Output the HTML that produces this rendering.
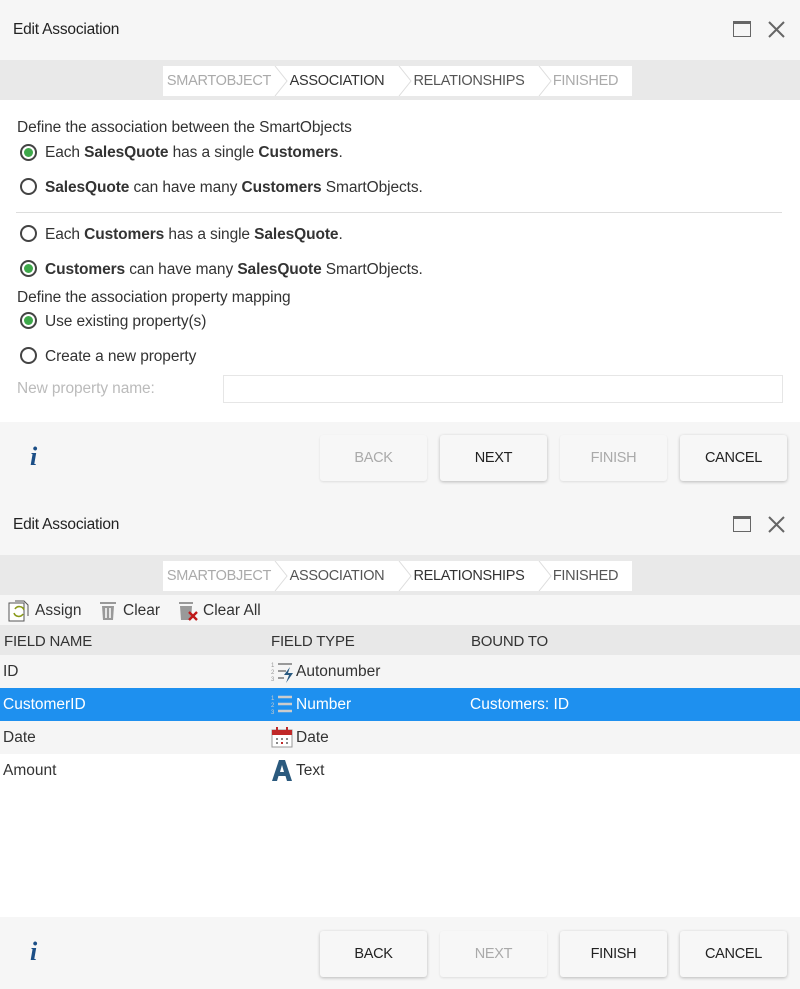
<!DOCTYPE html>
<html><head><style>
*{box-sizing:border-box;margin:0;padding:0}
body{width:800px;height:989px;overflow:hidden;font-family:"Liberation Sans",sans-serif;font-size:14px;color:#333;background:#fff;position:relative}
.abs{position:absolute}
.hdr{left:0;width:800px;height:61px;background:#f6f6f6}
.title{left:13px;font-size:15.5px;color:#222;letter-spacing:-.2px}
.wiz{left:0;width:800px;height:40px;background:#e9e9e9}
.steps{left:163px;width:469px;height:30px;background:#fff;display:flex;font-size:14.5px;letter-spacing:-.3px}
.steps span{display:flex;align-items:center;justify-content:center;position:relative}
.foot{left:0;width:800px;height:72px;background:#f6f6f6}
.btn{width:107px;height:46px;background:#f7f7f7;border-radius:3px;display:flex;align-items:center;justify-content:center;font-size:14.5px;color:#222;box-shadow:0 1px 3px rgba(0,0,0,.25);letter-spacing:-.3px}
.btn.dis{color:#aaa;box-shadow:0 1px 2px rgba(0,0,0,.1)}
.radio{width:17px;height:17px;border:2px solid #444;border-radius:50%;left:20px}
.radio.on::after{content:"";position:absolute;left:2px;top:2px;width:9px;height:9px;border-radius:50%;background:#3ea84a}
.lbl{left:45px;font-size:15.5px;color:#333;letter-spacing:-.1px}
.info{font-family:"Liberation Serif",serif;font-style:italic;font-weight:bold;font-size:26px;color:#1b4e86;left:30px}
.row{left:0;width:800px;height:33px;font-size:15.5px}
.row span{position:absolute;top:8px}
.tb{font-size:15.5px}
</style></head><body>
<!-- panel 1 -->
<div class="abs hdr" style="top:0"></div>
<div class="abs title" style="top:21px">Edit Association</div>
<div class="abs" style="left:733px;top:21px;width:18px;height:16px;border:1.5px solid #666;border-top-width:3px"></div>
<svg class="abs" style="left:767px;top:20px" width="19" height="19"><path d="M2 2L17 17M17 2L2 17" stroke="#666" stroke-width="2"/></svg>
<div class="abs wiz" style="top:60px"></div>
<div class="abs steps" style="top:66px">
<span style="width:112px;color:#aaa">SMARTOBJECT</span>
<span style="width:124px;color:#333">ASSOCIATION</span>
<span style="width:140px;color:#555">RELATIONSHIPS</span>
<span style="width:93px;color:#aaa">FINISHED</span>
</div>
<svg class="abs" style="left:163px;top:66px" width="469" height="30"><g fill="none" stroke="#ddd"><path d="M112 0L124 15L112 30M236 0L248 15L236 30M376 0L388 15L376 30"/></g></svg>
<div class="abs lbl" style="left:17px;top:119px">Define the association between the SmartObjects</div>
<div class="abs radio on" style="top:144px"></div><div class="abs lbl" style="top:144px">Each <b>SalesQuote</b> has a single <b>Customers</b>.</div>
<div class="abs radio" style="top:178px"></div><div class="abs lbl" style="top:179px"><b>SalesQuote</b> can have many <b>Customers</b> SmartObjects.</div>
<div class="abs" style="left:16px;top:212px;width:766px;height:1px;background:#ddd"></div>
<div class="abs radio" style="top:225px"></div><div class="abs lbl" style="top:226px">Each <b>Customers</b> has a single <b>SalesQuote</b>.</div>
<div class="abs radio on" style="top:260px"></div><div class="abs lbl" style="top:261px"><b>Customers</b> can have many <b>SalesQuote</b> SmartObjects.</div>
<div class="abs lbl" style="left:17px;top:289px">Define the association property mapping</div>
<div class="abs radio on" style="top:312px"></div><div class="abs lbl" style="top:313px">Use existing property(s)</div>
<div class="abs radio" style="top:347px"></div><div class="abs lbl" style="top:348px">Create a new property</div>
<div class="abs lbl" style="left:17px;top:380px;color:#bbb">New property name:</div>
<div class="abs" style="left:223px;top:375px;width:560px;height:28px;border:1px solid #e6e6e6"></div>
<div class="abs foot" style="top:422px"></div>
<div class="abs info" style="top:442px">i</div>
<div class="abs btn dis" style="left:320px;top:435px">BACK</div>
<div class="abs btn" style="left:440px;top:435px">NEXT</div>
<div class="abs btn dis" style="left:560px;top:435px">FINISH</div>
<div class="abs btn" style="left:680px;top:435px">CANCEL</div>
<!-- panel 2 -->
<div class="abs hdr" style="top:494px"></div>
<div class="abs title" style="top:516px">Edit Association</div>
<div class="abs" style="left:733px;top:516px;width:18px;height:16px;border:1.5px solid #666;border-top-width:3px"></div>
<svg class="abs" style="left:767px;top:515px" width="19" height="19"><path d="M2 2L17 17M17 2L2 17" stroke="#666" stroke-width="2"/></svg>
<div class="abs wiz" style="top:555px"></div>
<div class="abs steps" style="top:561px">
<span style="width:112px;color:#aaa">SMARTOBJECT</span>
<span style="width:124px;color:#555">ASSOCIATION</span>
<span style="width:140px;color:#333">RELATIONSHIPS</span>
<span style="width:93px;color:#555">FINISHED</span>
</div>
<svg class="abs" style="left:163px;top:561px" width="469" height="30"><g fill="none" stroke="#ddd"><path d="M112 0L124 15L112 30M236 0L248 15L236 30M376 0L388 15L376 30"/></g></svg>
<div class="abs" style="left:0;top:595px;width:800px;height:30px;background:#f6f6f6"></div>
<svg class="abs" style="left:8px;top:600px" width="24" height="22"><rect x="1" y="3" width="15" height="18" fill="#fff" stroke="#555"/><path d="M7 1h9l4 4v11" fill="none" stroke="#555"/><path d="M6 13a5 5 0 0 0 9 1M16 10a5 5 0 0 0-9-1" fill="none" stroke="#8a9a1a" stroke-width="1.6"/></svg>
<div class="abs tb" style="left:35px;top:602px">Assign</div>
<svg class="abs" style="left:99px;top:600px" width="18" height="21"><rect x="1" y="2" width="16" height="2" fill="#999"/><path d="M3 6h12l-1 14H4z" fill="#999"/><path d="M7 8v10M11 8v10" stroke="#fff" stroke-width="1.5"/></svg>
<div class="abs tb" style="left:123px;top:602px">Clear</div>
<svg class="abs" style="left:178px;top:600px" width="22" height="22"><rect x="1" y="2" width="14" height="2" fill="#999"/><path d="M2 6h12l-1 14H3z" fill="#999"/><path d="M11 12l8 8M19 12l-8 8" stroke="#c01818" stroke-width="2.4"/></svg>
<div class="abs tb" style="left:203px;top:602px">Clear All</div>
<div class="abs" style="left:0;top:625px;width:800px;height:30px;background:#e8e8e8"></div>
<div class="abs" style="left:4px;top:633px;font-size:15px;letter-spacing:-.2px">FIELD NAME</div>
<div class="abs" style="left:271px;top:633px;font-size:15px;letter-spacing:-.2px">FIELD TYPE</div>
<div class="abs" style="left:471px;top:633px;font-size:15px;letter-spacing:-.2px">BOUND TO</div>
<div class="abs row" style="top:655px;background:#f5f5f5"><span style="left:3px">ID</span><span style="left:296px">Autonumber</span></div>
<svg class="abs" style="left:271px;top:661px" width="23" height="22"><text x="0" y="6" font-size="6" fill="#999">1</text><text x="0" y="13" font-size="6" fill="#999">2</text><text x="0" y="20" font-size="6" fill="#999">3</text><path d="M7 3h14M7 10h8M7 17h6" stroke="#999" stroke-width="2"/><path d="M19 6l-6 8h5l-3 8 7-10h-5z" fill="#2a5a80"/></svg>
<div class="abs row" style="top:688px;background:#1e90ef;color:#fff"><span style="left:3px">CustomerID</span><span style="left:296px">Number</span><span style="left:470px">Customers: ID</span></div>
<svg class="abs" style="left:271px;top:694px" width="23" height="22"><text x="0" y="6" font-size="6" fill="#ccc">1</text><text x="0" y="13" font-size="6" fill="#ccc">2</text><text x="0" y="20" font-size="6" fill="#ccc">3</text><path d="M7 3h14M7 10h14M7 17h14" stroke="#ccc" stroke-width="2.5"/></svg>
<div class="abs row" style="top:721px;background:#f5f5f5"><span style="left:3px">Date</span><span style="left:296px">Date</span></div>
<svg class="abs" style="left:271px;top:726px" width="22" height="22"><rect x="1" y="4" width="20" height="17" fill="#fff" stroke="#999"/><rect x="1" y="4" width="20" height="5" fill="#c02828"/><path d="M6 1v6M16 1v6" stroke="#c02828" stroke-width="2"/><g fill="#888"><rect x="5" y="12" width="2" height="2"/><rect x="10" y="12" width="2" height="2"/><rect x="15" y="12" width="2" height="2"/><rect x="5" y="16" width="2" height="2"/><rect x="15" y="16" width="2" height="2"/></g><rect x="10" y="16" width="2" height="2" fill="#c02828"/></svg>
<div class="abs row" style="top:754px;background:#fff"><span style="left:3px">Amount</span><span style="left:296px">Text</span></div>
<svg class="abs" style="left:271px;top:759px" width="22" height="22"><path d="M1 22L8 1h6l7 21h-5l-1.5-5h-7L6 22zM9 13h4l-2-7z" fill="#2b5a7e" fill-rule="evenodd"/></svg>
<div class="abs foot" style="top:917px"></div>
<div class="abs info" style="top:937px">i</div>
<div class="abs btn" style="left:320px;top:931px">BACK</div>
<div class="abs btn dis" style="left:440px;top:931px">NEXT</div>
<div class="abs btn" style="left:560px;top:931px">FINISH</div>
<div class="abs btn" style="left:680px;top:931px">CANCEL</div>
</body></html>
